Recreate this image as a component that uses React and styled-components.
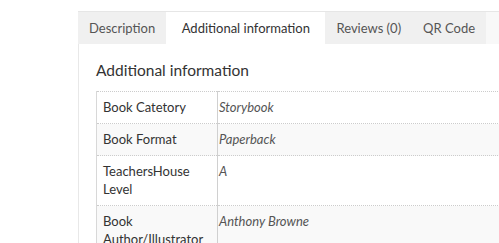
import React from "react";
import styled, { createGlobalStyle } from "styled-components";

const Global = createGlobalStyle`
  html, body { margin: 0; padding: 0; background: #fff; overflow: hidden; }
  body { font-family: Lato, "Open Sans", sans-serif; color: #333; }
`;

const Wrapper = styled.div`
  padding: 11px 0 0 78px;
`;

const TabBar = styled.ul`
  display: flex;
  margin: 0;
  padding: 0;
  list-style: none;
  height: 32px;
  border-top: 1px solid #e6e6e6;
  background: #f8f8f8;
`;

const Tab = styled.li`
  display: flex;
  align-items: center;
  padding: 0 ${(p) => p.$pad || 11}px;
  font-size: 13px;
  color: ${(p) => (p.$active ? "#333" : "#555")};
  background: ${(p) => (p.$active ? "#fff" : "#f0f0f0")};
  white-space: nowrap;
`;

const Panel = styled.div`
  border-left: 1px solid #e8e8e8;
  padding: 15px 0 0 17px;
  height: 200px;
`;

const Heading = styled.h2`
  margin: 0 0 10px;
  font-size: 15.5px;
  font-weight: 400;
  line-height: 22px;
  color: #333;
`;

const Table = styled.table`
  border-collapse: collapse;
  width: 460px;
  border-left: 1px solid #d8d8d8;
  font-size: 13px;
  line-height: 18px;
`;

const Row = styled.tr`
  background: ${(p) => (p.$alt ? "#f9f9f9" : "#fff")};
`;

const Label = styled.th`
  width: 108px;
  padding: 6px 6px 7px;
  text-align: left;
  vertical-align: top;
  font-weight: 400;
  color: #333;
  border-top: 1px dotted #ccc;
  border-right: 1px solid #d0d0d0;
`;

const Value = styled.td`
  padding: 6px 6px 7px 1px;
  vertical-align: top;
  font-style: italic;
  color: #555;
  border-top: 1px dotted #ccc;
`;

const rows = [
  ["Book Catetory", "Storybook"],
  ["Book Format", "Paperback"],
  ["TeachersHouse Level", "A"],
  ["Book Author/Illustrator", "Anthony Browne"],
];

export default function App() {
  return (
    <>
      <Global />
      <Wrapper>
        <TabBar>
          <Tab>Description</Tab>
          <Tab $active $pad={15.5}>Additional information</Tab>
          <Tab>Reviews (0)</Tab>
          <Tab>QR Code</Tab>
        </TabBar>
        <Panel>
          <Heading>Additional information</Heading>
          <Table>
            <tbody>
              {rows.map(([k, v], i) => (
                <Row key={k} $alt={i % 2 === 1}>
                  <Label>{k}</Label>
                  <Value>{v}</Value>
                </Row>
              ))}
            </tbody>
          </Table>
        </Panel>
      </Wrapper>
    </>
  );
}
